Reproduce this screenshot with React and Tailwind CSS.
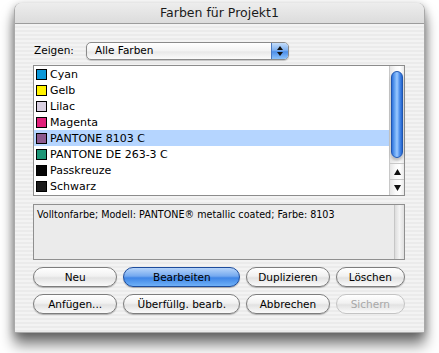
import React from "react";

const farben = [
  { name: "Cyan", color: "#0a97d9" },
  { name: "Gelb", color: "#fff200" },
  { name: "Lilac", color: "#d9d0e2" },
  { name: "Magenta", color: "#e0207a" },
  { name: "PANTONE 8103 C", color: "#8c5a8e" },
  { name: "PANTONE DE 263-3 C", color: "#1d9677" },
  { name: "Passkreuze", color: "#050505" },
  { name: "Schwarz", color: "#1c1c1c" },
];

const pinstripe =
  "bg-[repeating-linear-gradient(0deg,#ebebeb_0px,#ebebeb_2px,#f3f3f3_2px,#f3f3f3_4px)]";

function AquaButton({ label, width, primary, disabled }) {
  if (primary) {
    return (
      <button
        className={`${width} h-[20px] rounded-full border border-[#1d4c9c] bg-[linear-gradient(180deg,#b6d4fa_0%,#74a9ef_45%,#3f85e6_55%,#6fb1f7_100%)] text-[10.5px] text-black leading-none shadow-[0_1px_1px_rgba(0,0,0,0.3)]`}
      >
        {label}
      </button>
    );
  }
  return (
    <button
      className={`${width} h-[20px] rounded-full border ${
        disabled ? "border-[#c4c4c4] text-[#a8a8a8]" : "border-[#7d7d7d] text-black shadow-[0_1px_1px_rgba(0,0,0,0.25)]"
      } bg-[linear-gradient(180deg,#ffffff_0%,#f1f1f1_45%,#e2e2e2_55%,#fafafa_100%)] text-[10.5px] leading-none`}
    >
      {label}
    </button>
  );
}

export default function App() {
  const selected = 4;

  return (
    <div className="w-[439px] h-[353px] bg-white pt-[3px] pl-[14px] font-['DejaVu_Sans',sans-serif]">
      <div
        className={`w-[411px] h-[330px] rounded-t-[7px] flex flex-col ${pinstripe} shadow-[0_12px_14px_rgba(0,0,0,0.5),0_2px_8px_rgba(0,0,0,0.3)] border-x border-b border-[#a9a9a9]`}
      >
        {/* title bar */}
        <div className="h-[21px] rounded-t-[7px] border-b border-[#9c9c9c] bg-[linear-gradient(180deg,#ededed_0%,#dcdcdc_100%)] flex items-center justify-center">
          <span className="text-[12.5px] text-[#1a1a1a]">Farben für Projekt1</span>
        </div>

        <div className="flex flex-col pl-[18px] pr-[19px]">
          {/* Zeigen */}
          <div className="mt-[18px] h-[18px] flex items-center">
            <span className="text-[10.5px] text-black w-[53px] pl-[1px]">Zeigen:</span>
            <div className="w-[203px] h-[18px] rounded-[5px] border border-[#8a8a8a] bg-[linear-gradient(180deg,#ffffff_0%,#f3f3f3_50%,#e8e8e8_55%,#fbfbfb_100%)] flex items-center overflow-hidden shadow-[0_1px_1px_rgba(0,0,0,0.2)]">
              <span className="flex-1 pl-[8px] text-[10.5px] text-black">Alle Farben</span>
              <div className="w-[17px] h-full border-l border-[#4a78c0] bg-[linear-gradient(180deg,#c4ddfb_0%,#7fb1f0_45%,#4c8ee9_55%,#8cc2fa_100%)] flex flex-col items-center justify-center gap-[2px]">
                <svg width="6" height="4" viewBox="0 0 6 4">
                  <path d="M3 0 L6 4 L0 4 Z" fill="#111" />
                </svg>
                <svg width="6" height="4" viewBox="0 0 6 4">
                  <path d="M0 0 L6 0 L3 4 Z" fill="#111" />
                </svg>
              </div>
            </div>
          </div>

          {/* list */}
          <div className="mt-[5px] h-[131px] border border-[#8c8c8c] bg-white flex">
            <div className="flex-1 flex flex-col">
              {farben.map((f, i) => (
                <div
                  key={f.name}
                  className={`h-[16px] flex items-center pl-[2px] gap-[3px] ${
                    i === selected ? "bg-[#b5d5ff]" : ""
                  }`}
                >
                  <div
                    className="w-[11px] h-[11px] border border-black"
                    style={{ backgroundColor: f.color }}
                  />
                  <span className="text-[11px] text-black leading-none">{f.name}</span>
                </div>
              ))}
            </div>
            {/* scrollbar */}
            <div className="w-[15px] border-l border-[#c8c8c8] flex flex-col bg-[linear-gradient(90deg,#e6e6e6_0%,#fafafa_40%,#ffffff_70%,#eaeaea_100%)]">
              <div className="h-[98px] px-[1px] pt-[5px]">
                <div className="h-[87px] rounded-full border border-[#1f56b0] bg-[linear-gradient(90deg,#2f72dc_0%,#6aa8f4_30%,#9cc9ff_50%,#4f90ec_75%,#2465d0_100%)] shadow-[0_3px_3px_rgba(0,0,0,0.25)]" />
              </div>
              <div className="flex-1" />
              <div className="h-[16px] border-t border-[#c8c8c8] flex items-center justify-center">
                <svg width="7" height="6" viewBox="0 0 7 6">
                  <path d="M3.5 0 L7 6 L0 6 Z" fill="#111" />
                </svg>
              </div>
              <div className="h-[16px] border-t border-[#c8c8c8] flex items-center justify-center">
                <svg width="7" height="6" viewBox="0 0 7 6">
                  <path d="M0 0 L7 0 L3.5 6 Z" fill="#111" />
                </svg>
              </div>
            </div>
          </div>

          {/* description */}
          <div className="mt-[8px] h-[56px] border border-[#8f8f8f] bg-[#ebebeb] flex">
            <div className="flex-1 pl-[3px] pt-[3px] text-[9.6px] text-black">
              Volltonfarbe; Modell: PANTONE® metallic coated; Farbe: 8103
            </div>
            <div className="w-[10px] border-l border-[#c6c6c6] bg-[linear-gradient(90deg,#dcdcdc_0%,#f4f4f4_50%,#e0e0e0_100%)]" />
          </div>

          {/* buttons */}
          <div className="mt-[7px] flex gap-[6px]">
            <AquaButton label="Neu" width="w-[85px]" />
            <AquaButton label="Bearbeiten" width="w-[118px]" primary />
            <AquaButton label="Duplizieren" width="w-[84px]" />
            <AquaButton label="Löschen" width="w-[70px]" />
          </div>
          <div className="mt-[7px] flex gap-[6px]">
            <AquaButton label="Anfügen..." width="w-[85px]" />
            <AquaButton label="Überfüllg. bearb." width="w-[118px]" />
            <AquaButton label="Abbrechen" width="w-[84px]" />
            <AquaButton label="Sichern" width="w-[70px]" disabled />
          </div>
        </div>
      </div>
    </div>
  );
}
